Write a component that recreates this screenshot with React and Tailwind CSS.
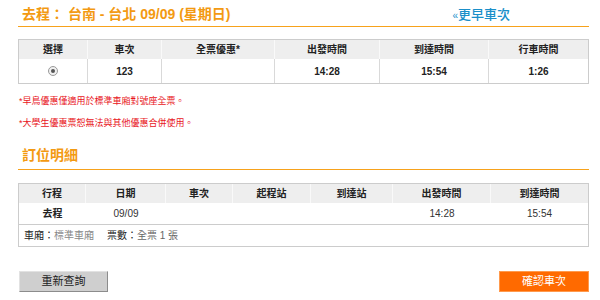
import React from "react";

const font = { fontFamily: '"Liberation Sans", "Noto Sans CJK TC", sans-serif' };

function Row({ cols, cells, className, cellClass }) {
  return (
    <div className={"grid " + cols + " " + className}>
      {cells.map((c, i) => (
        <div key={i} className={cellClass(i, cells.length)}>
          {c}
        </div>
      ))}
    </div>
  );
}

export default function App() {
  const cols1 = "grid-cols-[69px_74px_113px_105px_109px_1fr]";
  const cols2 = "grid-cols-[67px_80px_67px_78px_82px_98px_1fr]";
  const head = (i, n) =>
    "h-[19px] flex items-center justify-center text-[10px] font-bold text-[#222] " +
    (i < n - 1 ? "border-r border-[#f9f9f9]" : "");
  const body1 = (i, n) =>
    "h-[24px] flex items-center justify-center text-[10px] font-bold text-[#222] " +
    (i < n - 1 ? "border-r border-[#d9d9d9]" : "");
  const body2 = (i) =>
    "h-[21px] flex items-center justify-center text-[10px] " +
    (i === 0 ? "font-bold text-[#222]" : "text-[#333]");

  const radio = (
    <span className="inline-flex items-center justify-center w-[10px] h-[10px] rounded-full border border-[#9a9a9a] bg-[#f0f0f0]">
      <span className="w-[4px] h-[4px] rounded-full bg-[#555]" />
    </span>
  );

  return (
    <div className="w-[600px] h-[300px] bg-white overflow-hidden" style={font}>
      <div className="ml-[18px] w-[571px] pt-[6px]">
        <div className="flex items-center h-[16px]">
          <div className="pl-[4px] text-[14px] font-bold text-[#f39a12] leading-none">
            去程： 台南 - 台北 09/09 (星期日)
          </div>
          <div className="ml-[222px] text-[13px] font-medium text-[#1a8fc9] leading-none">
            <span className="text-[10px]">«</span>更早車次
          </div>
        </div>
        <div className="mt-[4px] h-[1px] bg-[#f7a21b]" />

        <div className="mt-[12px] border border-[#cccccc]">
          <Row
            cols={cols1}
            className="bg-[#eeeeee]"
            cellClass={head}
            cells={["選擇", "車次", "全票優惠*", "出發時間", "到達時間", "行車時間"]}
          />
          <Row
            cols={cols1}
            className="bg-white"
            cellClass={body1}
            cells={[radio, "123", "", "14:28", "15:54", "1:26"]}
          />
        </div>

        <div className="mt-[13px] text-[9px] leading-none text-[#e8141b] pl-[1px]">
          *早鳥優惠僅適用於標準車廂對號座全票。
        </div>
        <div className="mt-[13px] text-[9px] leading-none text-[#e8141b] pl-[1px]">
          *大學生優惠票恕無法與其他優惠合併使用。
        </div>

        <div className="mt-[20px] pl-[4px] text-[14px] font-bold text-[#f39a12] leading-none">
          訂位明細
        </div>
        <div className="mt-[7px] h-[1px] bg-[#f7a21b]" />

        <div className="mt-[13px] border border-[#cccccc]">
          <Row
            cols={cols2}
            className="bg-[#eeeeee]"
            cellClass={head}
            cells={["行程", "日期", "車次", "起程站", "到達站", "出發時間", "到達時間"]}
          />
          <Row
            cols={cols2}
            className="bg-white border-b border-[#cccccc]"
            cellClass={body2}
            cells={["去程", "09/09", "", "", "", "14:28", "15:54"]}
          />
          <div className="h-[21px] flex items-center pl-[5px] text-[10px]">
            <span className="text-[#222]">車廂：</span>
            <span className="text-[#888]">標準車廂</span>
            <span className="ml-[13px] text-[#222]">票數：</span>
            <span className="text-[#666]">全票 1 張</span>
          </div>
        </div>

        <div className="mt-[24px] flex justify-between items-center">
          <div className="ml-[1px] w-[89px] h-[21px] flex items-center justify-center bg-[#cfcfcf] border border-[#e2e2e2] border-r-[#8c8c8c] border-b-[#8c8c8c] text-[11px] text-[#222]">
            重新查詢
          </div>
          <div className="w-[90px] h-[21px] flex items-center justify-center bg-[#ff6a00] border border-[#ff9a4d] text-[11px] text-white">
            確認車次
          </div>
        </div>
      </div>
    </div>
  );
}
